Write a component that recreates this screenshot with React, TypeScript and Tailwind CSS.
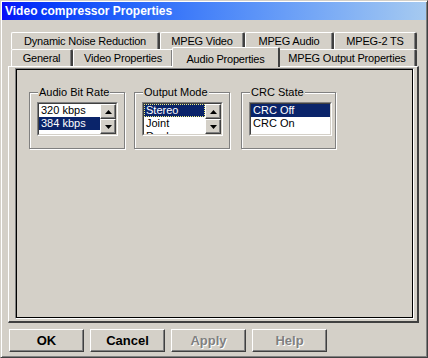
const raised =
  "border border-t-white border-l-white border-r-[#404040] border-b-[#404040] shadow-[inset_-1px_-1px_0_#808080]";

const Tab = ({ label, w, active }: { label: string; w: number; active?: boolean }) => {
  if (active) {
    return (
      <div
        className="relative z-10 -mx-[2px] -mt-[2px] h-[20px] flex items-start justify-center pt-[3px] bg-[#d4d0c8] tracking-[-0.2px] border-l border-t border-r-2 border-l-white border-t-white border-r-[#404040] rounded-tl-[2px] rounded-tr-[2px]"
        style={{ width: w + 4 }}
      >
        {label}
      </div>
    );
  }
  return (
    <div
      className="h-[17px] flex items-center justify-center tracking-[-0.2px] border-l border-t border-r-2 border-l-white border-t-white border-r-[#404040] rounded-tl-[2px] rounded-tr-[2px] shadow-[inset_-1px_0_0_#808080]"
      style={{ width: w }}
    >
      {label}
    </div>
  );
};

const Arrow = ({ down }: { down?: boolean }) => (
  <div className={`flex-1 flex items-center justify-center bg-[#d4d0c8] ${raised}`}>
    <svg width="7" height="4" viewBox="0 0 7 4">
      {down ? <path d="M0 0h7L3.5 4z" fill="#000" /> : <path d="M0 4h7L3.5 0z" fill="#000" />}
    </svg>
  </div>
);

type Item = { text: string; selected?: boolean; focus?: boolean };

const ListBox = ({ items, w, spin }: { items: Item[]; w: number; spin?: boolean }) => (
  <div
    className="h-[34px] border border-t-[#808080] border-l-[#808080] border-r-white border-b-white"
    style={{ width: w }}
  >
    <div className="h-full flex border border-t-[#404040] border-l-[#404040] border-r-[#d4d0c8] border-b-[#d4d0c8] bg-white">
      <div className="flex-1 overflow-hidden">
        {items.map((it) => (
          <div
            key={it.text}
            className={`h-[13px] leading-[13px] pl-[2px] ${
              it.selected ? "bg-[#0a246a] text-white" : "text-black"
            } ${it.focus ? "outline outline-1 outline-dotted outline-[#f0f080] -outline-offset-1" : ""}`}
          >
            {it.text}
          </div>
        ))}
      </div>
      {spin && (
        <div className="w-[16px] flex flex-col">
          <Arrow />
          <Arrow down />
        </div>
      )}
    </div>
  </div>
);

const Group = ({ title, w, children }: { title: string; w: number; children: React.ReactNode }) => (
  <div
    className="relative h-[57px] border border-[#808080] shadow-[inset_1px_1px_0_#fff,1px_1px_0_#fff] pl-[7px] pt-[9px]"
    style={{ width: w }}
  >
    <span className="absolute -top-[8px] left-[8px] px-[1px] bg-[#d4d0c8] leading-[14px]">{title}</span>
    {children}
  </div>
);

const Button = ({ label, disabled }: { label: string; disabled?: boolean }) => (
  <div
    className={`w-[75px] h-[23px] flex items-center justify-center text-[13px] font-bold ${raised} ${
      disabled ? "text-[#808080] [text-shadow:1px_1px_0_#fff]" : "text-black"
    }`}
  >
    {label}
  </div>
);

export default function App() {
  return (
    <div
      className="w-[428px] h-[358px] bg-[#d4d0c8] text-[11px] text-black flex flex-col border border-t-[#d4d0c8] border-l-[#d4d0c8] border-r-[#404040] border-b-[#404040] shadow-[inset_1px_1px_0_#fff,inset_-1px_-1px_0_#808080] p-[1px]"
      style={{ fontFamily: '"Liberation Sans", Arial, sans-serif' }}
    >
      <div className="h-[18px] flex items-center pl-[3px] bg-gradient-to-r from-[#0a0af8] to-[#a6caf0] text-white font-bold text-[12px]">
        Video compressor Properties
      </div>

      <div className="flex-1 flex flex-col px-[6px] pt-[12px]">
        <div className="flex flex-col pl-[3px]">
          <div className="flex">
            <Tab label="Dynamic Noise Reduction" w={149} />
            <Tab label="MPEG Video" w={85} />
            <Tab label="MPEG Audio" w={89} />
            <Tab label="MPEG-2 TS" w={83} />
          </div>
          <div className="flex h-[17px]">
            <Tab label="General" w={62} />
            <Tab label="Video Properties" w={101} />
            <Tab label="Audio Properties" w={104} active />
            <Tab label="MPEG Output Properties" w={139} />
          </div>
        </div>

        <div className="w-[411px] h-[257px] border-l border-t border-r-2 border-b-2 border-l-white border-t-white border-r-[#404040] border-b-[#404040] pl-[6px] pt-[1px] pr-[3px] pb-[2px]">
          <div className="h-full border border-t-[#808080] border-l-[#808080] border-r-white border-b-white">
            <div className="h-full border border-black flex items-start pl-[12px] pt-[22px]">
              <Group title="Audio Bit Rate" w={96}>
                <ListBox
                  w={81}
                  spin
                  items={[{ text: "320 kbps" }, { text: "384 kbps", selected: true }]}
                />
              </Group>
              <div className="ml-[9px]">
                <Group title="Output Mode" w={96}>
                  <ListBox
                    w={81}
                    spin
                    items={[{ text: "Stereo", selected: true, focus: true }, { text: "Joint" }, { text: "Dual" }]}
                  />
                </Group>
              </div>
              <div className="ml-[11px]">
                <Group title="CRC State" w={95}>
                  <ListBox w={83} items={[{ text: "CRC Off", selected: true }, { text: "CRC On" }]} />
                </Group>
              </div>
            </div>
          </div>
        </div>

        <div className="flex gap-[6px] pl-[1px] mt-[6px]">
          <Button label="OK" />
          <Button label="Cancel" />
          <Button label="Apply" disabled />
          <Button label="Help" disabled />
        </div>
      </div>
    </div>
  );
}
